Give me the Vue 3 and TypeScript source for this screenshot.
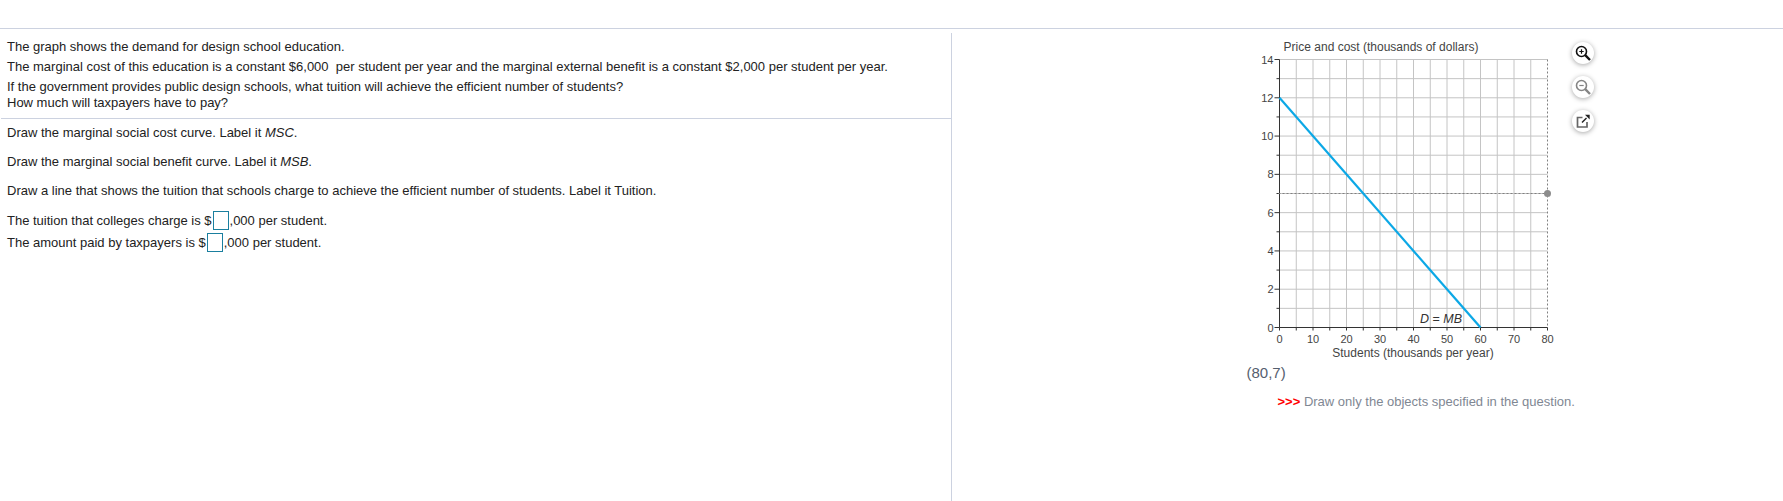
<script setup lang="ts">
const X0 = 59.5
const Y0 = 294.5
const W = 268
const H = 268

const px = (v: number) => X0 + (v / 80) * W
const py = (v: number) => Y0 - (v / 14) * H

const xSteps = Array.from({ length: 17 }, (_, i) => i * 5)
const ySteps = Array.from({ length: 15 }, (_, i) => i)
const xLabels = xSteps.filter((v) => v % 10 === 0)
const yLabels = ySteps.filter((v) => v % 2 === 0)
</script>

<template>
  <div class="page">
    <div class="columns">
      <section class="question">
        <div class="intro">
          <p class="line-a">The graph shows the demand for design school education.</p>
          <p class="line-a">The marginal cost of this education is a constant $6,000&nbsp; per student per year and the marginal external benefit is a constant $2,000 per student per year.</p>
          <p class="line-a">If the government provides public design schools, what tuition will achieve the efficient number of students?</p>
          <p class="line-b">How much will taxpayers have to pay?</p>
        </div>
        <div class="tasks">
          <p>Draw the marginal social cost curve. Label it <i>MSC</i>.</p>
          <p>Draw the marginal social benefit curve. Label it <i>MSB</i>.</p>
          <p>Draw a line that shows the tuition that schools charge to achieve the efficient number of students. Label it Tuition.</p>
          <div class="answers">
            <p>The tuition that colleges charge is $<span class="box"></span>,000 per student.</p>
            <p>The amount paid by taxpayers is $<span class="box"></span>,000 per student.</p>
          </div>
        </div>
      </section>

      <section class="figure">
        <div class="chart-row">
          <svg class="chart" width="340" height="330" viewBox="0 0 340 330">
            <text class="title" x="161" y="18" text-anchor="middle">Price and cost (thousands of dollars)</text>

            <line v-for="v in xSteps.slice(1, -1)" :key="'gx' + v" class="grid" :x1="px(v)" :x2="px(v)" :y1="py(14)" :y2="py(0)" />
            <line v-for="v in ySteps.slice(1)" :key="'gy' + v" class="grid" :x1="px(0)" :x2="px(80)" :y1="py(v)" :y2="py(v)" />
            <line class="edge" :x1="px(80)" :x2="px(80)" :y1="py(14)" :y2="py(0)" />

            <line class="axis" :x1="px(0)" :x2="px(0)" :y1="py(14)" :y2="py(0)" />
            <line class="axis" :x1="px(0)" :x2="px(80)" :y1="py(0)" :y2="py(0)" />
            <line v-for="v in ySteps" :key="'ty' + v" class="axis" :x1="px(0) - (v % 2 === 0 ? 5 : 3)" :x2="px(0)" :y1="py(v)" :y2="py(v)" />
            <line v-for="v in xSteps" :key="'tx' + v" class="axis" :x1="px(v)" :x2="px(v)" :y1="py(0)" :y2="py(0) + 3" />

            <text v-for="v in yLabels" :key="'ly' + v" class="tick" :x="px(0) - 6" :y="py(v) + 4" text-anchor="end">{{ v }}</text>
            <text v-for="v in xLabels" :key="'lx' + v" class="tick" :x="px(v)" :y="py(0) + 15" text-anchor="middle">{{ v }}</text>

            <line class="guide" :x1="px(0) - 1" :x2="px(80)" :y1="py(7)" :y2="py(7)" />
            <circle class="dot" :cx="px(80)" :cy="py(7)" r="3.5" />
            <line class="demand" :x1="px(0)" :y1="py(12)" :x2="px(60)" :y2="py(0)" />

            <text class="curve-label" x="221" y="290" text-anchor="middle"><tspan class="em">D</tspan> = <tspan class="em">MB</tspan></text>
            <text class="title" x="193" y="324" text-anchor="middle">Students (thousands per year)</text>
          </svg>

          <div class="tools">
            <button class="tool">
              <svg width="18" height="18" viewBox="0 0 18 18" fill="none" stroke="#111" stroke-width="1.6">
                <circle cx="7.5" cy="7.5" r="5" />
                <path d="M11.2 11.2 16 16" stroke-width="2.4" />
                <path d="M5.3 7.5h4.4M7.5 5.3v4.4" stroke-width="1.2" />
              </svg>
            </button>
            <button class="tool">
              <svg width="18" height="18" viewBox="0 0 18 18" fill="none" stroke="#858585" stroke-width="1.6">
                <circle cx="7.5" cy="7.5" r="5" />
                <path d="M11.2 11.2 16 16" stroke-width="2.4" />
                <path d="M5.3 7.5h4.4" stroke-width="1.2" />
              </svg>
            </button>
            <button class="tool">
              <svg width="18" height="18" viewBox="0 0 18 18" fill="none" stroke="#666" stroke-width="1.7">
                <path d="M8.5 5.5H3.5v9.5h9.5V10" />
                <path d="M8 10.5 12.5 6" stroke="#222" stroke-width="1.5" />
                <path d="M11 2.8h4.7v4.7z" fill="#222" stroke="none" />
              </svg>
            </button>
          </div>
        </div>
        <div class="coords">(80,7)</div>
        <div class="note"><span class="arrows">&gt;&gt;&gt;</span> Draw only the objects specified in the question.</div>
      </section>
    </div>
  </div>
</template>

<style>
html,
body {
  margin: 0;
  background: #fff;
}
</style>

<style scoped>
.page {
  width: 1783px;
  height: 501px;
  overflow: hidden;
  padding-top: 28px;
  box-sizing: border-box;
  font-family: 'Liberation Sans', Arial, sans-serif;
  font-size: 13px;
  color: #222;
}

.columns {
  display: flex;
  height: 473px;
  border-top: 1px solid #ccd2e0;
  padding-top: 4px;
}

p {
  margin: 0;
}

.question {
  width: 951px;
  flex-shrink: 0;
  border-right: 1px solid #ccd2e0;
}

.intro {
  padding: 4px 0 7px 6px;
  border-bottom: 1px solid #ccd2e0;
  margin-left: 1px;
}

.line-a {
  height: 20px;
  line-height: 20px;
}

.line-b {
  height: 16px;
  line-height: 16px;
  margin-top: -2px;
}

.tasks {
  margin-top: -1px;
  padding-left: 7px;
}

.tasks > p {
  line-height: 29px;
}

.answers {
  margin-top: 5px;
}

.answers p {
  height: 22px;
  line-height: 22px;
}

.box {
  display: inline-block;
  width: 14px;
  height: 17px;
  border: 1px solid #1a7f9f;
  vertical-align: -5px;
  margin: 0 1px;
}

.figure {
  padding-left: 268px;
  flex: 1;
}

.chart-row {
  display: flex;
  align-items: flex-start;
}

.chart {
  display: block;
  flex-shrink: 0;
}

.title,
.tick {
  font-family: 'Liberation Sans', Arial, sans-serif;
  font-size: 11px;
  fill: #444;
}

.title {
  font-size: 12px;
}

.grid {
  stroke: #c4c4c4;
  stroke-width: 1;
}

.edge,
.guide {
  stroke: #808080;
  stroke-width: 1;
  stroke-dasharray: 2 2;
}

.axis {
  stroke: #333;
  stroke-width: 1;
}

.dot {
  fill: #8c8c8c;
}

.demand {
  stroke: #0ca8e6;
  stroke-width: 2.2;
}

.curve-label {
  font-family: 'Liberation Sans', Arial, sans-serif;
  font-size: 12.5px;
  fill: #333;
}

.em {
  font-style: italic;
}

.tools {
  display: flex;
  flex-direction: column;
  gap: 12px;
  margin: 9px 0 0 12px;
}

.tool {
  width: 22px;
  height: 22px;
  padding: 0;
  border: 0;
  border-radius: 50%;
  background: #fff;
  box-shadow: 0 1px 5px rgba(0, 0, 0, 0.35);
  display: grid;
  place-items: center;
}

.coords {
  margin: 2px 0 0 26.5px;
  font-size: 15px;
  line-height: 16px;
  color: #555e6e;
}

.note {
  margin: 14px 0 0 57.5px;
  font-size: 13px;
  line-height: 14px;
  color: #7f8793;
}

.arrows {
  color: #f00;
  font-weight: 700;
}
</style>
